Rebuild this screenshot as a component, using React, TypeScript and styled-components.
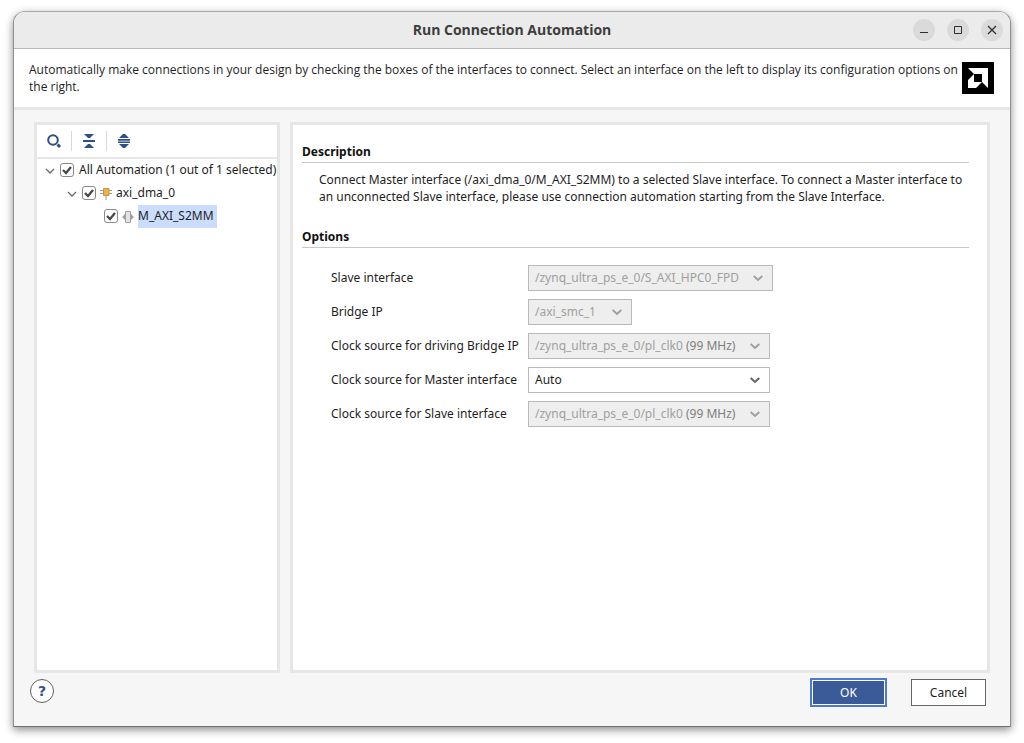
import React, { useId } from "react";
import styled, { createGlobalStyle } from "styled-components";

const GlobalStyle = createGlobalStyle`
  *, *::before, *::after { box-sizing: border-box; }
  body {
    margin: 0;
    background: #fff;
    color: #1e1e1e;
    font-family: "Noto Sans", "Open Sans", sans-serif;
    font-size: 12px;
    line-height: 17px;
  }
  button, select { font: inherit; }
`;

const Desktop = styled.div`
  display: flex;
  min-height: 100vh;
  padding: 11px 13px 16px;
`;

const Dialog = styled.main`
  flex: 1;
  min-width: 0;
  display: flex;
  flex-direction: column;
  border: 1px solid #8f8f8f;
  border-top-color: #a8a8a8;
  border-bottom-color: #6f6f6f;
  border-radius: 12px 12px 0 0;
  background: #f6f6f6;
  box-shadow: 0 3px 8px rgba(0, 0, 0, 0.45);
  overflow: hidden;
`;

const TitleBar = styled.header`
  display: grid;
  grid-template-columns: 1fr auto 1fr;
  align-items: center;
  height: 37px;
  padding: 0 7px;
  background: #ebebeb;
  border-bottom: 1px solid #b8b8b8;
`;

const Title = styled.h1`
  grid-column: 2;
  margin: 0;
  font-family: "Open Sans", "Noto Sans", sans-serif;
  font-size: 14px;
  line-height: 20px;
  color: #3d3d3d;
`;

const WindowControls = styled.div`
  display: flex;
  justify-content: flex-end;
  gap: 12px;
`;

const WindowButton = styled.button`
  display: grid;
  place-items: center;
  width: 22px;
  height: 22px;
  padding: 0;
  border: 0;
  border-radius: 50%;
  background: #dadada;
  color: #2e2e2e;
`;

const Intro = styled.section`
  display: flex;
  justify-content: space-between;
  gap: 2px;
  padding: 12px 16px 12px 15px;
  background: #fff;
  border-bottom: 3px solid #e6e6e6;
`;

const IntroText = styled.p`
  margin: 0;
  font-family: "Open Sans", "Noto Sans", sans-serif;
`;

const Logo = styled.svg`
  flex: none;
  width: 32px;
  height: 32px;
  margin-top: 1px;
`;

const Content = styled.div`
  flex: 1;
  display: flex;
  gap: 10px;
  padding: 12px 20px 0;
`;

const Panel = styled.section`
  border: 3px solid #e6e6e6;
  background: #fff;
`;

const TreePanel = styled(Panel)`
  flex: none;
  width: 246px;
`;

const DetailsPanel = styled(Panel)`
  flex: 1;
  min-width: 0;
  padding: 18px 18px 18px 9px;
`;

const Toolbar = styled.div`
  display: flex;
  align-items: center;
  height: 34px;
  border-bottom: 2px solid #e6e6e6;
`;

const ToolButton = styled.button`
  display: grid;
  place-items: center;
  width: 34px;
  height: 20px;
  padding: 0;
  border: 0;
  background: none;
  color: #2f4f8a;

  & + & {
    width: 35px;
    border-left: 1px solid #d8d8d8;
  }
`;

const Tree = styled.ul`
  margin: 0;
  padding: 0;
  list-style: none;
`;

const TreeItem = styled.li<{ $level: number }>`
  display: flex;
  align-items: center;
  height: 23px;
  padding-left: ${(p) => 8 + p.$level * 22}px;
  white-space: nowrap;
`;

const Expander = styled.button`
  display: grid;
  place-items: center;
  width: 10px;
  height: 10px;
  margin-right: 5px;
  padding: 0;
  border: 0;
  background: none;
  color: #6a6a6a;
`;

const ExpanderSpace = styled.span`
  width: 15px;
`;

const CheckBox = styled.input`
  appearance: none;
  flex: none;
  width: 14px;
  height: 14px;
  margin: 0 0 1px;
  border: 1px solid #8a8a8a;
  border-radius: 3px;
  background: #fff;

  &:checked {
    background: #fff
      url("data:image/svg+xml,%3Csvg xmlns='http://www.w3.org/2000/svg' viewBox='0 0 12 12'%3E%3Cpath d='M2 6l3 3 5-6' fill='none' stroke='%23484848' stroke-width='2.3'/%3E%3C/svg%3E")
      center / 12px 12px no-repeat;
  }
`;

const TreeLabel = styled.label<{ $selected?: boolean }>`
  display: flex;
  align-items: center;
  height: 23px;
  margin-left: ${(p) => (p.$selected ? 4 : 5)}px;
  padding: 0 3px 2px 0;
  background: ${(p) => (p.$selected ? "#cbddfd" : "none")};
`;

const NodeIcon = styled.svg`
  flex: none;
  width: 12px;
  height: 14px;
  margin-left: 4px;

  & + label { margin-left: 4px; }
`;

const SectionTitle = styled.h2`
  margin: 0;
  padding-bottom: 2px;
  border-bottom: 1px solid #c8c8c8;
  font-size: 12px;
  line-height: 17px;
  color: #111;
`;

const Description = styled.p`
  margin: 8px 0 23px 17px;
`;

const Options = styled.form`
  display: grid;
  grid-template-columns: max-content 1fr;
  gap: 8px;
  align-items: center;
  padding: 17px 0 0 29px;
`;

const OptionLabel = styled.label`
  min-width: 189px;
  padding-bottom: 2px;
`;

const SelectBox = styled.div<{ $width: number; $disabled?: boolean }>`
  position: relative;
  display: flex;
  align-items: center;
  width: ${(p) => p.$width}px;
  height: 26px;
  border: 1px solid #bababa;
  background: ${(p) => (p.$disabled ? "#eee" : "#fff")};
  color: ${(p) => (p.$disabled ? "#7e7e7e" : "#1e1e1e")};
`;

const Select = styled.select<{ $fill: boolean }>`
  appearance: none;
  flex: ${(p) => (p.$fill ? "1" : "none")};
  min-width: 0;
  height: 24px;
  padding: 0 0 2px 6px;
  border: 0;
  background: none;
  color: #1e1e1e;

  &:disabled { color: #a0a0a0; opacity: 1; }
`;

const Suffix = styled.span`
  margin-left: 3px;
  padding-bottom: 2px;
  white-space: nowrap;
`;

const SelectArrow = styled.svg<{ $disabled?: boolean }>`
  position: absolute;
  right: 9px;
  top: 8px;
  width: 10px;
  height: 8px;
  pointer-events: none;
  color: ${(p) => (p.$disabled ? "#a0a0a0" : "#636363")};
`;

const Footer = styled.footer`
  display: flex;
  align-items: center;
  gap: 24px;
  padding: 5px 24px 19px 16px;
`;

const HelpButton = styled.button`
  align-self: flex-start;
  width: 24px;
  height: 24px;
  margin: 1px auto 0 0;
  padding: 0;
  border: 1px solid #5f5f5f;
  border-radius: 50%;
  background: #fff;
  color: #34508f;
  font-family: "DejaVu Sans", sans-serif;
  font-size: 14px;
  font-weight: 700;
  line-height: 22px;
`;

const DialogButton = styled.button<{ $primary?: boolean }>`
  width: ${(p) => (p.$primary ? 77 : 75)}px;
  height: ${(p) => (p.$primary ? 29 : 27)}px;
  padding: 0;
  border: ${(p) => (p.$primary ? "2px solid #4b7bd1" : "1px solid #666")};
  background: ${(p) => (p.$primary ? "#3b5b98" : "#fff")};
  box-shadow: ${(p) => (p.$primary ? "inset 0 0 0 1px #fff" : "none")};
  color: ${(p) => (p.$primary ? "#fff" : "#1e1e1e")};
`;

function ExpandArrow() {
  return (
    <Expander type="button" aria-label="Collapse">
      <svg width="10" height="6" viewBox="0 0 10 6" fill="none" stroke="currentColor" strokeWidth="1.3">
        <path d="M1 1l4 4 4-4" />
      </svg>
    </Expander>
  );
}

interface OptionProps {
  label: string;
  value: string;
  suffix?: string;
  width: number;
  disabled?: boolean;
}

const options: OptionProps[] = [
  { label: "Slave interface", value: "/zynq_ultra_ps_e_0/S_AXI_HPC0_FPD", width: 245, disabled: true },
  { label: "Bridge IP", value: "/axi_smc_1", width: 104, disabled: true },
  { label: "Clock source for driving Bridge IP", value: "/zynq_ultra_ps_e_0/pl_clk0", suffix: "(99 MHz)", width: 242, disabled: true },
  { label: "Clock source for Master interface", value: "Auto", width: 242 },
  { label: "Clock source for Slave interface", value: "/zynq_ultra_ps_e_0/pl_clk0", suffix: "(99 MHz)", width: 242, disabled: true },
];

function Option({ label, value, suffix, width, disabled }: OptionProps) {
  const id = useId();
  return (
    <>
      <OptionLabel htmlFor={id}>{label}</OptionLabel>
      <SelectBox $width={width} $disabled={disabled}>
        <Select id={id} disabled={disabled} $fill={!suffix}>
          <option>{value}</option>
        </Select>
        {suffix && <Suffix>{suffix}</Suffix>}
        <SelectArrow $disabled={disabled} viewBox="0 0 10 8" fill="none" stroke="currentColor" strokeWidth="2">
          <path d="M0.7 2l4.3 4 4.3-4" />
        </SelectArrow>
      </SelectBox>
    </>
  );
}

export default function App() {
  return (
    <>
      <GlobalStyle />
      <Desktop>
        <Dialog>
          <TitleBar>
            <Title>Run Connection Automation</Title>
            <WindowControls>
              <WindowButton type="button" aria-label="Minimize">
                <svg width="10" height="10" stroke="currentColor"><path d="M1 7.5h8" /></svg>
              </WindowButton>
              <WindowButton type="button" aria-label="Maximize">
                <svg width="10" height="10" stroke="currentColor" fill="none"><path d="M1.5 1.5h7v7h-7z" /></svg>
              </WindowButton>
              <WindowButton type="button" aria-label="Close">
                <svg width="10" height="10" stroke="currentColor" strokeWidth="1.3"><path d="M1 1l8 8M9 1l-8 8" /></svg>
              </WindowButton>
            </WindowControls>
          </TitleBar>

          <Intro>
            <IntroText>
              Automatically make connections in your design by checking the boxes of the interfaces to connect. Select an
              interface on the left to display its configuration options on the right.
            </IntroText>
            <Logo viewBox="0 0 32 32" role="img" aria-label="AMD">
              <rect width="32" height="32" />
              <path fill="#fff" d="M6 6h20v20l-6-6v-8h-8z" />
              <path fill="#fff" d="M12 12v8h8l-6 6H6v-8z" />
            </Logo>
          </Intro>

          <Content>
            <TreePanel>
              <Toolbar>
                <ToolButton type="button" aria-label="Search">
                  <svg width="16" height="16" viewBox="0 0 16 16" fill="none" stroke="currentColor" strokeWidth="2">
                    <circle cx="7" cy="7" r="4.800" /><path d="M11.500 11.500l2.500 2.500" strokeWidth="3" />
                  </svg>
                </ToolButton>
                <ToolButton type="button" aria-label="Collapse all">
                  <svg width="12" height="14" viewBox="0 0 12 14" fill="currentColor">
                    <path d="M1 0h10L7 4H5zM0 6h12v2H0zM5 10h2l4 4H1z" />
                  </svg>
                </ToolButton>
                <ToolButton type="button" aria-label="Expand all">
                  <svg width="12" height="14" viewBox="0 0 12 14" fill="currentColor">
                    <path d="M5 0h2l4 4H1zM0 5h12v1.700H0zM0 7.500h12V9H0zM1 10h10l-4 4H5z" />
                  </svg>
                </ToolButton>
              </Toolbar>
              <Tree>
                <TreeItem $level={0}>
                  <ExpandArrow />
                  <CheckBox type="checkbox" id="all" defaultChecked />
                  <TreeLabel htmlFor="all">All Automation (1 out of 1 selected)</TreeLabel>
                </TreeItem>
                <TreeItem $level={1}>
                  <ExpandArrow />
                  <CheckBox type="checkbox" id="dma" defaultChecked />
                  <NodeIcon viewBox="0 0 12 14">
                    <path d="M0 3.5h12M0 6.5h12M6 8v5" stroke="#999" />
                    <path d="M3.5 1.500h5.500v7h-5.500z" fill="#fbb034" stroke="#b49a68" />
                  </NodeIcon>
                  <TreeLabel htmlFor="dma">axi_dma_0</TreeLabel>
                </TreeItem>
                <TreeItem $level={2}>
                  <ExpanderSpace />
                  <CheckBox type="checkbox" id="s2mm" defaultChecked />
                  <NodeIcon viewBox="0 0 12 14">
                    <path d="M3.5 1.500h5v11h-5z" fill="#e2e2e2" stroke="#a0a0a0" />
                    <path d="M0 7l3-3v6zM12 7l-3-3v6z" fill="#a0a0a0" />
                  </NodeIcon>
                  <TreeLabel htmlFor="s2mm" $selected>M_AXI_S2MM</TreeLabel>
                </TreeItem>
              </Tree>
            </TreePanel>

            <DetailsPanel>
              <SectionTitle>Description</SectionTitle>
              <Description>
                Connect Master interface (/axi_dma_0/M_AXI_S2MM) to a selected Slave interface. To connect a Master
                interface to an unconnected Slave interface, please use connection automation starting from the Slave
                Interface.
              </Description>
              <SectionTitle>Options</SectionTitle>
              <Options>
                {options.map((option) => (
                  <Option key={option.label} {...option} />
                ))}
              </Options>
            </DetailsPanel>
          </Content>

          <Footer>
            <HelpButton type="button" aria-label="Help">?</HelpButton>
            <DialogButton type="button" $primary>OK</DialogButton>
            <DialogButton type="button">Cancel</DialogButton>
          </Footer>
        </Dialog>
      </Desktop>
    </>
  );
}
